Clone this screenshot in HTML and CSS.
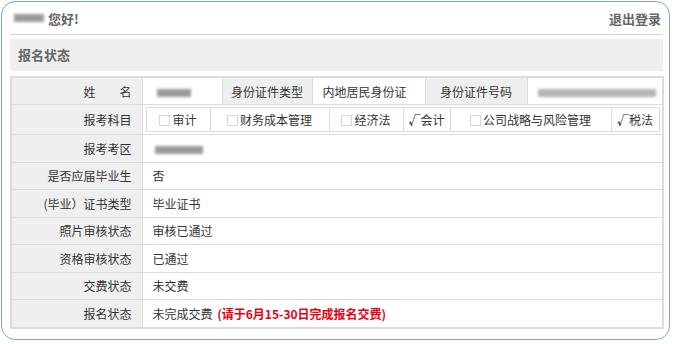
FILE: index.html
```html
<!DOCTYPE html>
<html lang="zh-CN">
<head>
  <meta charset="UTF-8" />
  <title>报名状态</title>
  <link rel="stylesheet" href="styles.css">
</head>
<body>

  <div class="panel">
    <div class="top-bar">
      <div class="hello"><span class="blur blur-name"></span>您好!</div>
      <a class="logout" href="#">退出登录</a>
    </div>

    <div class="section-title">报名状态</div>

    <table class="info">
      <colgroup>
        <col style="width:131px">
        <col style="width:80px">
        <col style="width:90px">
        <col style="width:113px">
        <col style="width:102px">
        <col style="width:136px">
      </colgroup>
      <tr class="r1">
        <th>姓&emsp;&emsp;名</th>
        <td><span class="blur blur-short"></span></td>
        <th class="mid">身份证件类型</th>
        <td>内地居民身份证</td>
        <th class="mid">身份证件号码</th>
        <td><span class="blur blur-id"></span></td>
      </tr>
      <tr class="r2">
        <th>报考科目</th>
        <td colspan="5" class="subjects-cell">
          <table class="subjects">
            <colgroup>
              <col style="width:64px">
              <col style="width:119px">
              <col style="width:74px">
              <col style="width:47px">
              <col style="width:161px">
              <col style="width:48px">
            </colgroup>
            <tr>
              <td><span class="box"></span>审计</td>
              <td><span class="box"></span>财务成本管理</td>
              <td><span class="box"></span>经济法</td>
              <td><span class="tick">√</span>会计</td>
              <td><span class="box"></span>公司战略与风险管理</td>
              <td><span class="tick">√</span>税法</td>
            </tr>
          </table>
        </td>
      </tr>
      <tr>
        <th>报考考区</th>
        <td colspan="5"><span class="blur blur-area"></span></td>
      </tr>
      <tr>
        <th>是否应届毕业生</th>
        <td colspan="5">否</td>
      </tr>
      <tr>
        <th>(毕业）证书类型</th>
        <td colspan="5">毕业证书</td>
      </tr>
      <tr>
        <th>照片审核状态</th>
        <td colspan="5">审核已通过</td>
      </tr>
      <tr>
        <th>资格审核状态</th>
        <td colspan="5">已通过</td>
      </tr>
      <tr>
        <th>交费状态</th>
        <td colspan="5">未交费</td>
      </tr>
      <tr>
        <th>报名状态</th>
        <td colspan="5">未完成交费 <span class="warn">(请于6月15-30日完成报名交费)</span></td>
      </tr>
    </table>
  </div>

</body>
</html>
```

FILE: styles.css
```css
body {
  margin: 0;
  background: #fff;
  font-family: "Noto Sans CJK SC", "Microsoft YaHei", sans-serif;
  font-size: 12px;
  color: #333;
}

.panel {
  margin: 1px 0 0 1px;
  width: 653px;
  height: 337px;
  padding: 0 6px 0 8px;
  border: 1px solid #7ea2d6;
  border-radius: 14px;
}

.top-bar {
  display: flex;
  justify-content: space-between;
  align-items: center;
  height: 32px;
  padding: 0 2px 0 4px;
  border-bottom: 1px solid #d4d4d4;
  font-size: 13px;
  font-weight: bold;
  color: #666;
}

.hello {
  display: flex;
  align-items: center;
}

.logout {
  color: #666;
  text-decoration: none;
}

.section-title {
  margin-top: 4px;
  height: 32px;
  line-height: 32px;
  padding-left: 8px;
  background: #efefef;
  font-size: 13px;
  font-weight: bold;
  color: #666;
}

.blur {
  display: inline-block;
  height: 8px;
  background: #9a9a9a;
  filter: blur(1.5px);
  vertical-align: middle;
}

.blur-name {
  width: 30px;
  margin-right: 4px;
}

.blur-short {
  width: 34px;
  margin-left: 4px;
}

.blur-id {
  width: 118px;
  background: #b4b4b4;
}

.blur-area {
  width: 48px;
  margin-left: 2px;
}

.info {
  margin-top: 5px;
  width: 653px;
  border-collapse: collapse;
  table-layout: fixed;
  border: 2px solid #dcdcdc;
}

.info th,
.info td {
  border: 1px solid #dcdcdc;
  height: 26.5px;
  padding: 0 10px;
  font-weight: normal;
  white-space: nowrap;
}

.info th {
  background: #efefef;
  text-align: right;
}

.info th.mid {
  text-align: center;
  padding: 0;
}

.info td {
  text-align: left;
}

.info tr.r1 th,
.info tr.r1 td {
  height: 26px;
}

.info tr.r2 td.subjects-cell {
  height: 29px;
  padding: 0 3px;
}

.subjects {
  width: 513px;
  border-collapse: collapse;
  table-layout: fixed;
  border: 1px solid #dcdcdc;
}

.subjects td {
  border: 1px solid #dcdcdc;
  height: 23px;
  padding: 0;
  text-align: center;
}

.box {
  display: inline-block;
  width: 9px;
  height: 9px;
  margin-right: 2px;
  border: 1px solid #d6d6d6;
  vertical-align: -1px;
}

.tick {
  font-weight: bold;
  color: #222;
}

.warn {
  margin-left: 2px;
  color: #e60012;
  font-weight: bold;
}
```
